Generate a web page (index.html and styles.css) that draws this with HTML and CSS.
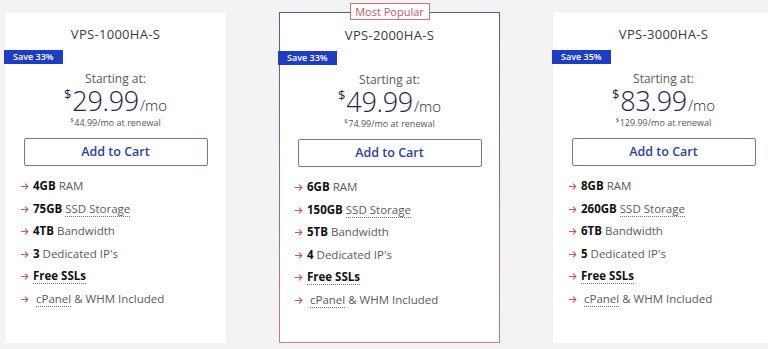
FILE: index.html
```html
<!DOCTYPE html>
<html lang="en">
<head>
<meta charset="utf-8">
<title>VPS Plans</title>
<link rel="stylesheet" href="styles.css">
</head>
<body>
<div class="plans">
  <div class="card">
    <h3 class="title">VPS-1000HA-S</h3>
    <div class="badge">Save 33%</div>
    <div class="start">Starting at:</div>
    <div class="price"><span class="cur">$</span><span class="amt">29.99</span><span class="per">/mo</span></div>
    <div class="renew"><span class="rcur">$</span>44.99/mo at renewal</div>
    <a class="cart">Add to Cart</a>
    <ul class="features">
      <li><svg class="arr" viewBox="0 0 8 7"><path d="M0 3.5h7M4 .7l2.8 2.8L4 6.3"/></svg><b>4GB</b> RAM</li>
      <li><svg class="arr" viewBox="0 0 8 7"><path d="M0 3.5h7M4 .7l2.8 2.8L4 6.3"/></svg><b>75GB</b> <span class="dot">SSD Storage</span></li>
      <li><svg class="arr" viewBox="0 0 8 7"><path d="M0 3.5h7M4 .7l2.8 2.8L4 6.3"/></svg><b>4TB</b> Bandwidth</li>
      <li><svg class="arr" viewBox="0 0 8 7"><path d="M0 3.5h7M4 .7l2.8 2.8L4 6.3"/></svg><b>3</b> Dedicated IP's</li>
      <li><svg class="arr" viewBox="0 0 8 7"><path d="M0 3.5h7M4 .7l2.8 2.8L4 6.3"/></svg><b class="dot">Free SSLs</b></li>
      <li><svg class="arr" viewBox="0 0 8 7"><path d="M0 3.5h7M4 .7l2.8 2.8L4 6.3"/></svg> <span class="dot">cPanel</span> &amp; WHM Included</li>
    </ul>
  </div>
  <div class="card popular">
    <div class="flag">Most Popular</div>
    <h3 class="title">VPS-2000HA-S</h3>
    <div class="badge">Save 33%</div>
    <div class="start">Starting at:</div>
    <div class="price"><span class="cur">$</span><span class="amt">49.99</span><span class="per">/mo</span></div>
    <div class="renew"><span class="rcur">$</span>74.99/mo at renewal</div>
    <a class="cart">Add to Cart</a>
    <ul class="features">
      <li><svg class="arr" viewBox="0 0 8 7"><path d="M0 3.5h7M4 .7l2.8 2.8L4 6.3"/></svg><b>6GB</b> RAM</li>
      <li><svg class="arr" viewBox="0 0 8 7"><path d="M0 3.5h7M4 .7l2.8 2.8L4 6.3"/></svg><b>150GB</b> <span class="dot">SSD Storage</span></li>
      <li><svg class="arr" viewBox="0 0 8 7"><path d="M0 3.5h7M4 .7l2.8 2.8L4 6.3"/></svg><b>5TB</b> Bandwidth</li>
      <li><svg class="arr" viewBox="0 0 8 7"><path d="M0 3.5h7M4 .7l2.8 2.8L4 6.3"/></svg><b>4</b> Dedicated IP's</li>
      <li><svg class="arr" viewBox="0 0 8 7"><path d="M0 3.5h7M4 .7l2.8 2.8L4 6.3"/></svg><b class="dot">Free SSLs</b></li>
      <li><svg class="arr" viewBox="0 0 8 7"><path d="M0 3.5h7M4 .7l2.8 2.8L4 6.3"/></svg> <span class="dot">cPanel</span> &amp; WHM Included</li>
    </ul>
  </div>
  <div class="card">
    <h3 class="title">VPS-3000HA-S</h3>
    <div class="badge">Save 35%</div>
    <div class="start">Starting at:</div>
    <div class="price"><span class="cur">$</span><span class="amt">83.99</span><span class="per">/mo</span></div>
    <div class="renew"><span class="rcur">$</span>129.99/mo at renewal</div>
    <a class="cart">Add to Cart</a>
    <ul class="features">
      <li><svg class="arr" viewBox="0 0 8 7"><path d="M0 3.5h7M4 .7l2.8 2.8L4 6.3"/></svg><b>8GB</b> RAM</li>
      <li><svg class="arr" viewBox="0 0 8 7"><path d="M0 3.5h7M4 .7l2.8 2.8L4 6.3"/></svg><b>260GB</b> <span class="dot">SSD Storage</span></li>
      <li><svg class="arr" viewBox="0 0 8 7"><path d="M0 3.5h7M4 .7l2.8 2.8L4 6.3"/></svg><b>6TB</b> Bandwidth</li>
      <li><svg class="arr" viewBox="0 0 8 7"><path d="M0 3.5h7M4 .7l2.8 2.8L4 6.3"/></svg><b>5</b> Dedicated IP's</li>
      <li><svg class="arr" viewBox="0 0 8 7"><path d="M0 3.5h7M4 .7l2.8 2.8L4 6.3"/></svg><b class="dot">Free SSLs</b></li>
      <li><svg class="arr" viewBox="0 0 8 7"><path d="M0 3.5h7M4 .7l2.8 2.8L4 6.3"/></svg> <span class="dot">cPanel</span> &amp; WHM Included</li>
    </ul>
  </div>
</div>
</body>
</html>
```
FILE: styles.css
```css
html, body {
  margin: 0;
  padding: 0;
  background: #f3f3f3;
  overflow: hidden;
  font-family: "Open Sans", "Noto Sans", sans-serif;
}
.plans {
  display: flex;
  gap: 53px;
  padding: 12px 0 0 5px;
  width: 900px;
}
.card {
  flex: none;
  box-sizing: border-box;
  width: 221px;
  height: 331px;
  background: #fff;
  position: relative;
  display: flex;
  flex-direction: column;
  align-items: center;
  box-shadow: 0 0 3px rgba(0,0,0,0.04);
}
.card.popular {
  border: 1px solid;
  border-image: linear-gradient(180deg, #4f5f98 0%, #8a6c8e 50%, #c27c8a 100%) 1;
}
.flag {
  position: absolute;
  top: -10px;
  left: 50%;
  transform: translateX(-50%);
  width: 80px;
  height: 17px;
  box-sizing: border-box;
  border: 1px solid #c7727e;
  background: #fff;
  color: #c2596a;
  font-size: 11px;
  line-height: 15px;
  text-align: center;
}
.title {
  margin: 14px 0 0;
  font-size: 13px;
  font-weight: 400;
  line-height: 16px;
  color: #3a3a3a;
  letter-spacing: 0.3px;
}
.badge {
  align-self: flex-start;
  margin: 8px 0 0 -1px;
  width: 59px;
  height: 14px;
  background: #1f3dc2;
  color: #fff;
  font-size: 9px;
  line-height: 14px;
  font-weight: 600;
  padding-left: 9px;
  box-sizing: border-box;
}
.popular .badge { margin-left: -2px; }
.start {
  margin-top: 7px;
  font-size: 12px;
  line-height: 16px;
  color: #5a5a5a;
}
.price {
  display: flex;
  align-items: baseline;
  color: #1d2447;
  height: 28px;
  line-height: 28px;
  font-weight: 300;
}
.cur {
  font-size: 13px;
  align-self: flex-start;
  line-height: 14px;
  margin-right: 1px;
  font-weight: 400;
}
.amt {
  font-size: 27px;
  letter-spacing: -0.3px;
}
.per {
  font-size: 15px;
  margin-left: 1px;
}
.renew {
  margin-top: 2px;
  font-size: 9px;
  line-height: 12px;
  height: 12px;
  color: #555;
  display: flex;
  align-items: baseline;
}
.rcur {
  font-size: 6px;
  line-height: 6px;
  align-self: flex-start;
  margin-right: 0.5px;
}
.cart {
  margin-top: 9px;
  width: 184px;
  height: 28px;
  box-sizing: border-box;
  border: 1px solid #6d7aa6;
  border-radius: 2px;
  color: #2b3fa3;
  font-size: 12.5px;
  font-weight: 600;
  line-height: 26px;
  text-align: center;
}
.features {
  align-self: stretch;
  list-style: none;
  margin: 13px 0 0;
  padding: 0 0 0 16px;
  font-size: 11.5px;
  color: #5a5a5a;
}
.popular .features { padding-left: 15px; }
.features li {
  height: 22.6px;
  line-height: 14px;
  white-space: nowrap;
}
.features b {
  color: #111;
  font-weight: 700;
}
.arr {
  width: 8px;
  height: 7px;
  margin-right: 4px;
  vertical-align: 0;
}
.arr path {
  fill: none;
  stroke: #c4566c;
  stroke-width: 1.1;
}
.dot {
  border-bottom: 1px dotted #6b6f90;
}
```
